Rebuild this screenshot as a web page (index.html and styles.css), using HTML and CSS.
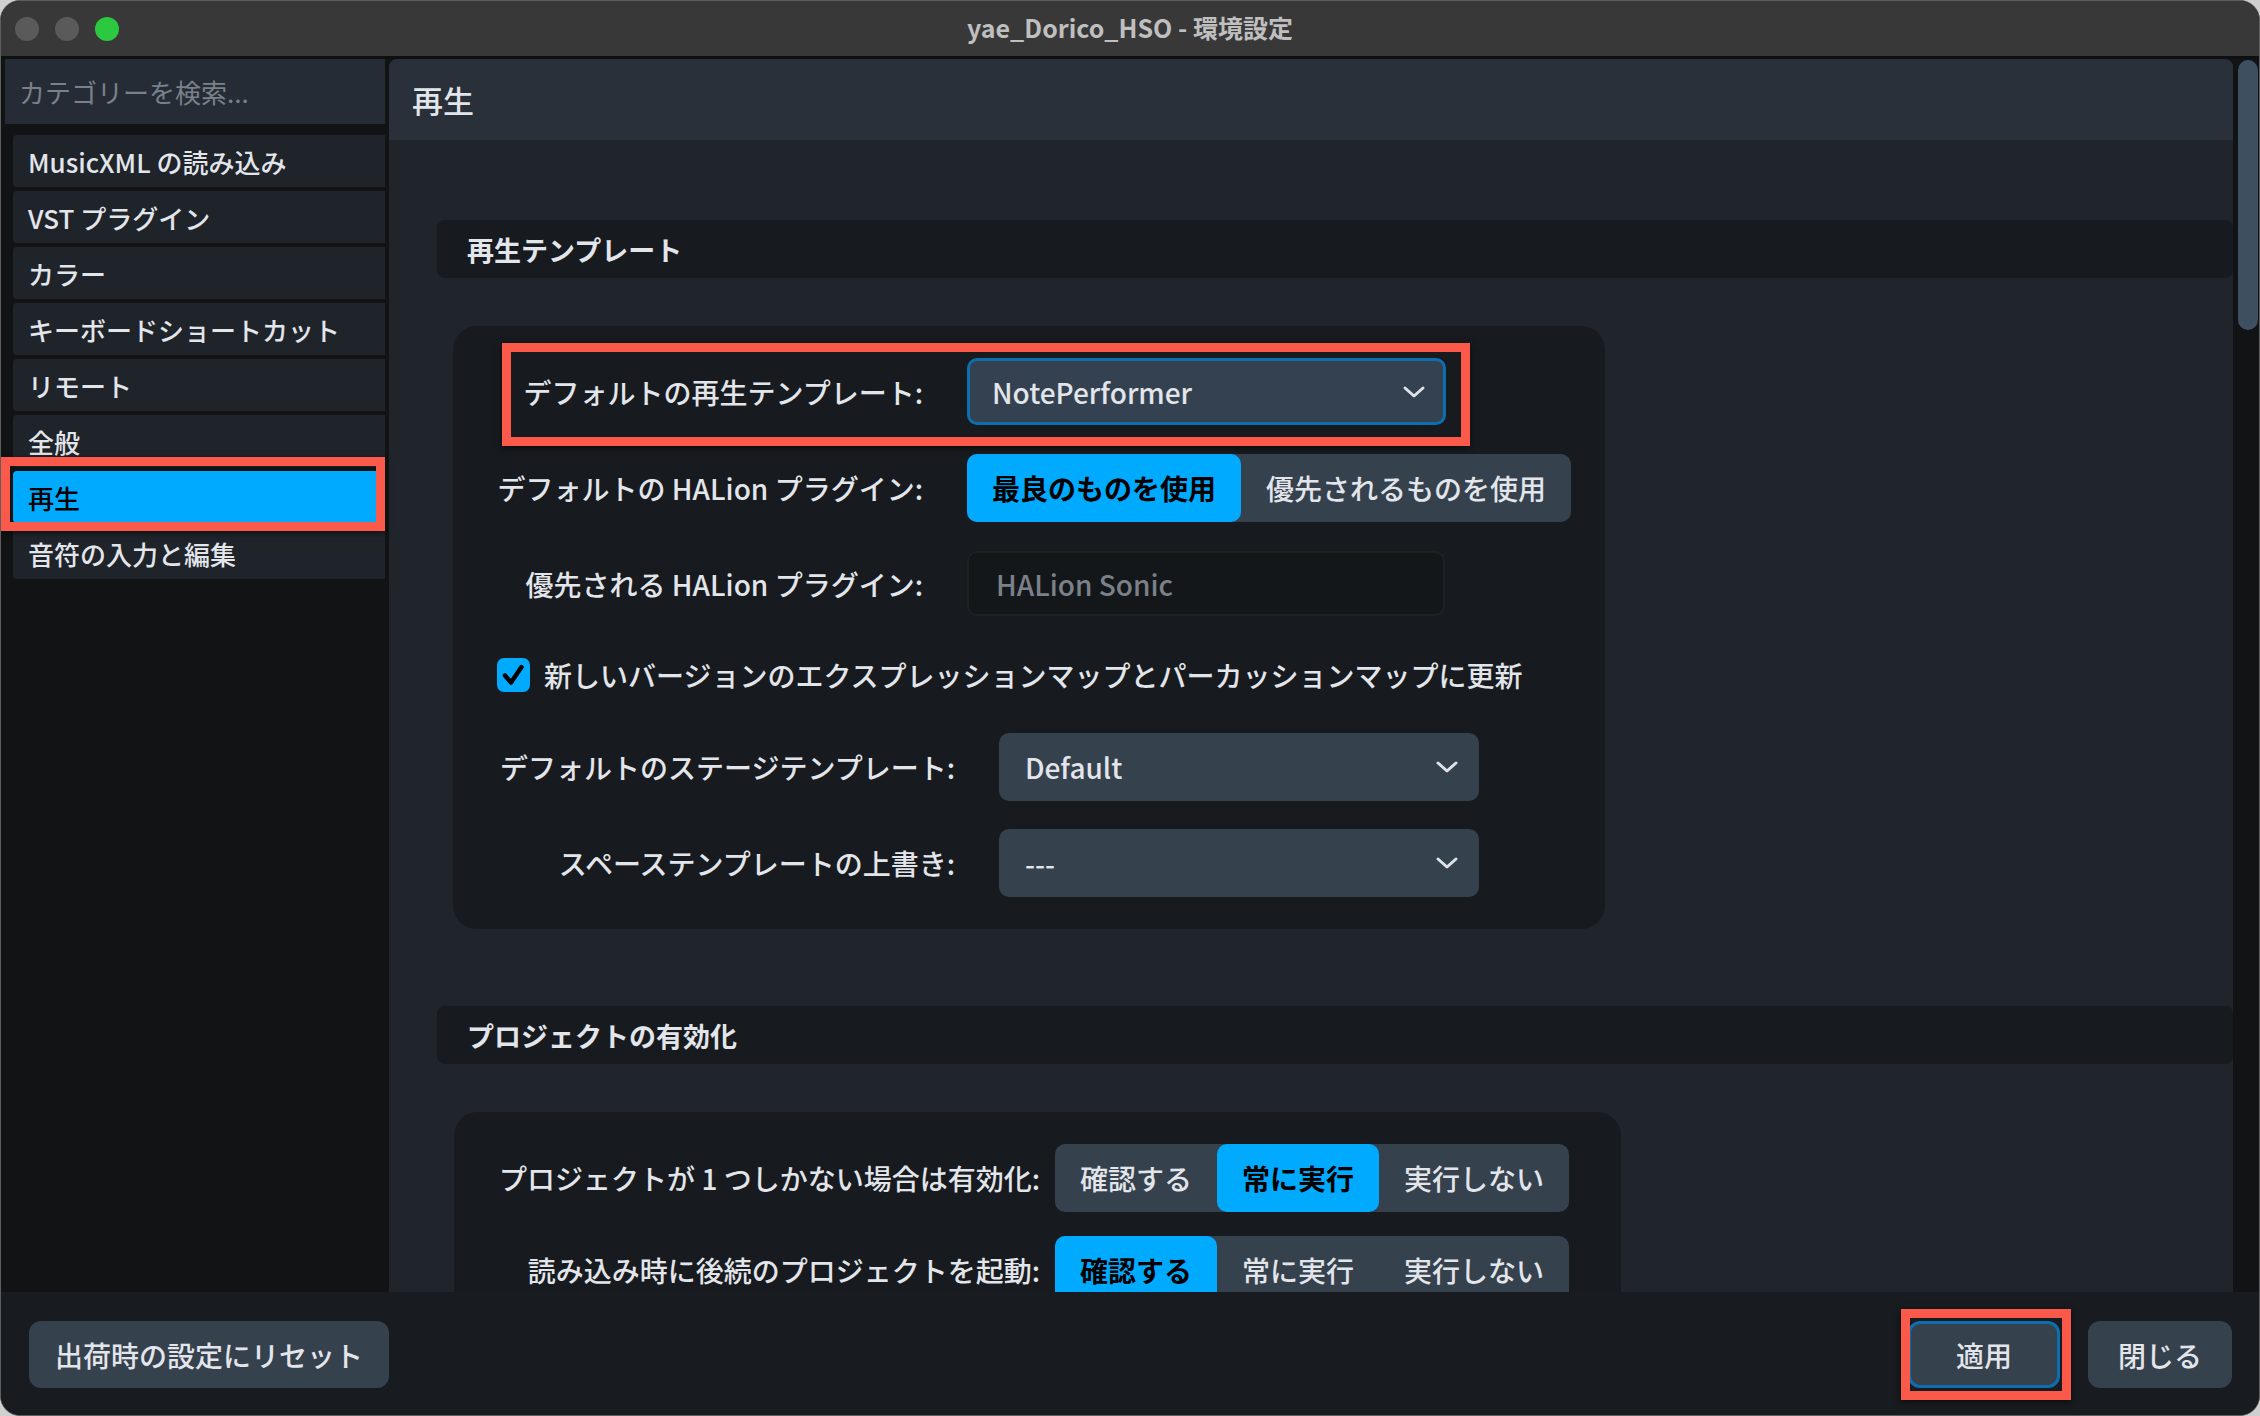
FILE: index.html
```html
<!DOCTYPE html>
<html lang="ja">
<head>
    <meta charset="utf-8">
    <title>yae_Dorico_HSO - 環境設定</title>
    <link rel="stylesheet" href="styles.css">
</head>
<body>
    <div class="window">
        <div class="titlebar">
            <div class="lights">
                <span class="light"></span>
                <span class="light"></span>
                <span class="light green"></span>
            </div>
            <div class="title">yae_Dorico_HSO - 環境設定</div>
            <div></div>
        </div>

        <div class="main">
            <aside class="sidebar">
                <div class="search">カテゴリーを検索...</div>
                <ul class="cats">
                    <li>MusicXML の読み込み</li>
                    <li>VST プラグイン</li>
                    <li>カラー</li>
                    <li>キーボードショートカット</li>
                    <li>リモート</li>
                    <li>全般</li>
                    <li class="active mark mark-side">再生</li>
                    <li>音符の入力と編集</li>
                </ul>
            </aside>

            <div class="panel">
                <div class="panel-head">再生</div>
                <div class="panel-body">
                    <h2 class="sec-head">再生テンプレート</h2>
                    <div class="group group-one">
                        <div class="form form-a">
                            <div class="row mark mark-row">
                                <span class="label">デフォルトの再生テンプレート:</span>
                                <div class="select focused">
                                    <span>NotePerformer</span>
                                    <svg class="chev" width="24" height="14" viewBox="0 0 24 14"><path d="M3 3 L12 11 L21 3" /></svg>
                                </div>
                            </div>
                            <div class="row">
                                <span class="label">デフォルトの HALion プラグイン:</span>
                                <div class="seg">
                                    <span class="on">最良のものを使用</span>
                                    <span>優先されるものを使用</span>
                                </div>
                            </div>
                            <div class="row">
                                <span class="label">優先される HALion プラグイン:</span>
                                <div class="field">HALion Sonic</div>
                            </div>
                        </div>

                        <div class="check-row">
                            <span class="check">
                                <svg width="33" height="34" viewBox="0 0 33 34"><path d="M8 17.5 L14 24.5 L24.5 9" /></svg>
                            </span>
                            <span>新しいバージョンのエクスプレッションマップとパーカッションマップに更新</span>
                        </div>

                        <div class="form form-b">
                            <div class="row">
                                <span class="label">デフォルトのステージテンプレート:</span>
                                <div class="select">
                                    <span>Default</span>
                                    <svg class="chev" width="24" height="14" viewBox="0 0 24 14"><path d="M3 3 L12 11 L21 3" /></svg>
                                </div>
                            </div>
                            <div class="row">
                                <span class="label">スペーステンプレートの上書き:</span>
                                <div class="select">
                                    <span>---</span>
                                    <svg class="chev" width="24" height="14" viewBox="0 0 24 14"><path d="M3 3 L12 11 L21 3" /></svg>
                                </div>
                            </div>
                        </div>
                    </div>

                    <h2 class="sec-head sec-two">プロジェクトの有効化</h2>
                    <div class="group group-two">
                        <div class="form form-c">
                            <div class="row">
                                <span class="label">プロジェクトが 1 つしかない場合は有効化:</span>
                                <div class="seg">
                                    <span>確認する</span>
                                    <span class="on">常に実行</span>
                                    <span>実行しない</span>
                                </div>
                            </div>
                            <div class="row">
                                <span class="label">読み込み時に後続のプロジェクトを起動:</span>
                                <div class="seg">
                                    <span class="on">確認する</span>
                                    <span>常に実行</span>
                                    <span>実行しない</span>
                                </div>
                            </div>
                        </div>
                    </div>
                </div>
            </div>

            <div class="scrollbar"><div class="thumb"></div></div>
        </div>

        <div class="footer">
            <button class="btn">出荷時の設定にリセット</button>
            <div class="footer-right">
                <button class="btn apply mark mark-btn">適用</button>
                <button class="btn">閉じる</button>
            </div>
        </div>
    </div>
</body>
</html>
```

FILE: styles.css
```css
/* Dorico preferences window, dark theme */
body {
    margin: 0;
    background-color: #cfcfcf;
    font-family: "Noto Sans CJK JP", "Noto Sans", sans-serif;
    color: #e2e5ea;
}

.window {
    width: 2260px;
    height: 1416px;
    box-sizing: border-box;
    border: 1px solid #5e5e5e;
    border-radius: 20px;
    overflow: hidden;
    background-color: #181b1f;
    display: flex;
    flex-direction: column;
}

/* title bar */
.titlebar {
    height: 55px;
    flex: none;
    background-color: #383838;
    border-bottom: 3px solid #0e0f10;
    display: grid;
    grid-template-columns: 1fr auto 1fr;
    align-items: center;
}

.lights {
    display: flex;
    gap: 16px;
    padding-left: 14px;
}

.light {
    width: 24px;
    height: 24px;
    border-radius: 50%;
    background-color: #5a5a5a;
}

.light.green {
    background-color: #2bc840;
}

.title {
    font-size: 25px;
    font-weight: 700;
    color: #bfbfbf;
    padding-bottom: 4px;
}

/* sidebar + panel */
.main {
    height: 1233px;
    flex: none;
    display: flex;
    background-color: #111315;
}

.sidebar {
    width: 380px;
    padding-left: 4px;
    flex: none;
}

.search {
    height: 65px;
    background-color: #262c35;
    display: flex;
    align-items: center;
    padding-left: 14px;
    font-size: 26px;
    color: #7a818b;
}

.cats {
    list-style: none;
    margin: 11px 0 0 8px;
    padding: 0;
}

.cats li {
    height: 52px;
    margin-bottom: 4px;
    background-color: #1f232a;
    border-radius: 4px 0 0 4px;
    display: flex;
    align-items: center;
    padding-left: 15px;
    font-size: 26px;
    font-weight: 500;
}

.cats li.active {
    background-color: #00aaff;
    color: #000;
}

.panel {
    width: 1844px;
    margin-left: 4px;
    flex: none;
    background-color: #20242b;
    border-radius: 8px 8px 0 0;
    display: flex;
    flex-direction: column;
    overflow: hidden;
}

.panel-head {
    height: 81px;
    flex: none;
    background-color: #29303a;
    display: flex;
    align-items: center;
    padding-left: 23px;
    font-size: 31px;
    font-weight: 500;
}

.panel-body {
    flex: 1;
    overflow: hidden;
    padding: 80px 0 0 48px;
}

.sec-head {
    margin: 0;
    height: 58px;
    background-color: #171a1e;
    border-radius: 8px;
    display: flex;
    align-items: center;
    padding-left: 30px;
    font-size: 27px;
    font-weight: 700;
}

.sec-two {
    margin-top: 77px;
}

.group {
    background-color: #171a1e;
    border-radius: 24px;
    margin-top: 48px;
    padding: 32px 0 32px 44px;
}

.group-one {
    width: 1108px;
    margin-left: 16px;
}

.group-two {
    width: 1118px;
    margin-left: 17px;
    padding-left: 49px;
    padding-bottom: 120px;
}

.form {
    display: flex;
    flex-direction: column;
    gap: 29px;
    padding-left: 6px;
}

.form-b {
    gap: 28px;
    margin-top: 38px;
}

.form-c {
    gap: 24px;
    padding-left: 0;
}

.row {
    display: flex;
    align-items: center;
    align-self: flex-start;
}

.label {
    flex: none;
    display: flex;
    justify-content: flex-end;
    white-space: nowrap;
    font-size: 28px;
    font-weight: 500;
    margin-right: 44px;
}

.form-a .label {
    width: 420px;
}

.form-b .label {
    width: 452px;
}

.form-c .label {
    width: 537px;
    margin-right: 15px;
}

.select {
    width: 479px;
    height: 67px;
    box-sizing: border-box;
    background-color: #36414e;
    border-radius: 10px;
    display: flex;
    align-items: center;
    justify-content: space-between;
    padding: 0 20px 0 26px;
    font-size: 28px;
    font-weight: 500;
}

.form-b .select {
    width: 480px;
    height: 68px;
}

.select.focused {
    border: 3px solid #0d6ead;
    background-color: #344150;
    padding-left: 22px;
    padding-right: 17px;
}

.chev path {
    fill: none;
    stroke: #dfe3e8;
    stroke-width: 3;
    stroke-linecap: round;
    stroke-linejoin: round;
}

.seg {
    display: flex;
    height: 68px;
    background-color: #36414e;
    border-radius: 10px;
    font-size: 28px;
    font-weight: 500;
}

.seg span {
    display: flex;
    align-items: center;
    padding: 0 25px;
    border-radius: 10px;
}

.seg span.on {
    background-color: #00aaff;
    color: #000;
    font-weight: 700;
}

.field {
    width: 478px;
    height: 65px;
    box-sizing: border-box;
    background-color: #14171a;
    border: 2px solid #1d2126;
    border-radius: 10px;
    display: flex;
    align-items: center;
    padding-left: 27px;
    font-size: 28px;
    font-weight: 500;
    color: #7b8189;
}

.check-row {
    display: flex;
    align-items: center;
    gap: 14px;
    margin-top: 39px;
    font-size: 28px;
    font-weight: 500;
}

.check {
    width: 33px;
    height: 34px;
    background-color: #00aaff;
    border-radius: 7px;
    display: flex;
}

.check path {
    fill: none;
    stroke: #000;
    stroke-width: 4.5;
    stroke-linecap: round;
    stroke-linejoin: round;
}

/* scrollbar */
.scrollbar {
    width: 20px;
    margin-left: 5px;
    padding-top: 1px;
    flex: none;
}

.thumb {
    height: 270px;
    background-color: #3e5060;
    border-radius: 10px;
}

/* footer */
.footer {
    flex: 1;
    display: flex;
    justify-content: space-between;
    align-items: flex-start;
    padding: 29px 27px 0 28px;
    background-color: #181b1f;
}

.footer-right {
    display: flex;
    gap: 28px;
}

.btn {
    height: 67px;
    min-width: 144px;
    box-sizing: border-box;
    padding: 0 26px;
    border: none;
    border-radius: 12px;
    background-color: #36414e;
    color: #e2e5ea;
    font-family: inherit;
    font-size: 28px;
    font-weight: 500;
}

.btn.apply {
    width: 152px;
    border: 3px solid #0d6ead;
}

/* red annotation boxes drawn over the screenshot */
.mark {
    position: relative;
}

.mark::after {
    content: "";
    position: absolute;
    border: 9px solid #fb5a4a;
    box-shadow: 0 2px 6px rgba(0, 0, 0, 0.55);
    pointer-events: none;
}

.mark-side::after {
    top: -14px;
    bottom: -8px;
    left: -12px;
    right: 0;
}

.mark-row::after {
    top: -15px;
    bottom: -21px;
    left: -1px;
    right: -24px;
}

.mark-btn::after {
    top: -15px;
    bottom: -15px;
    left: -10px;
    right: -14px;
}
```
